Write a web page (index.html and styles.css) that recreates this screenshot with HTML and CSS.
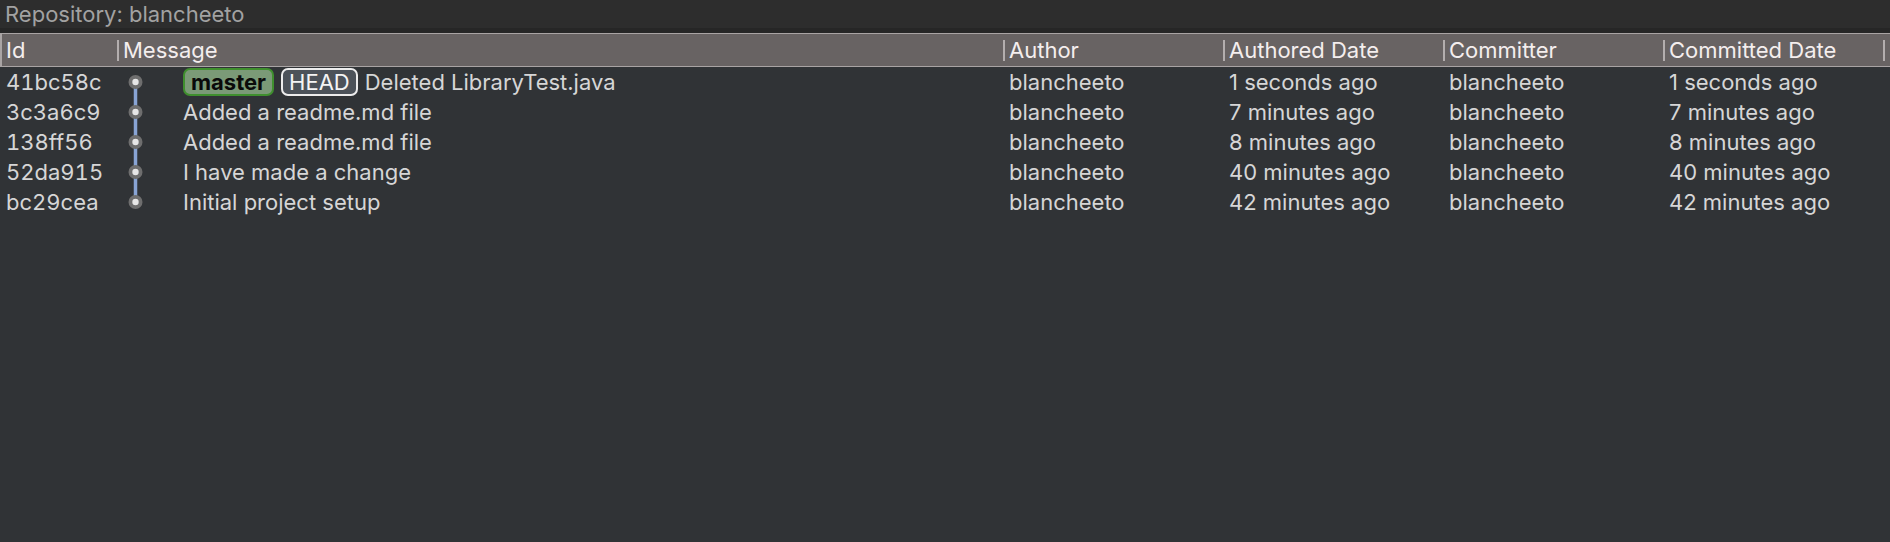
FILE: index.html
```html
<!DOCTYPE html>
<html>
<head>
<meta charset="utf-8">
<link rel="stylesheet" href="styles.css">
</head>
<body>
<div class="app">
  <div class="repo-bar">Repository: blancheeto</div>
  <div class="history">
    <div class="grid head">
      <div class="hcell">Id</div>
      <div class="hcell sep">Message</div>
      <div class="hcell sep">Author</div>
      <div class="hcell sep">Authored Date</div>
      <div class="hcell sep">Committer</div>
      <div class="hcell sep">Committed Date</div>
      <div class="hcell sep"></div>
    </div>

    <div class="grid row">
      <div class="cell id">41bc58c</div>
      <div class="cell msg">
        <svg class="graph" width="65" height="30" viewBox="0 0 65 30"><line x1="18.5" y1="15" x2="18.5" y2="30" stroke="#88a4d4" stroke-width="3.5"/><circle cx="18.5" cy="15" r="7" fill="#6e6e6e"/><circle cx="18.5" cy="15" r="3.2" fill="#e6e6e6"/></svg>
        <span class="badge badge-branch">master</span>
        <span class="badge badge-head">HEAD</span>
        <span class="text">Deleted LibraryTest.java</span>
      </div>
      <div class="cell">blancheeto</div>
      <div class="cell">1 seconds ago</div>
      <div class="cell">blancheeto</div>
      <div class="cell">1 seconds ago</div>
      <div class="cell"></div>
    </div>

    <div class="grid row">
      <div class="cell id">3c3a6c9</div>
      <div class="cell msg">
        <svg class="graph" width="65" height="30" viewBox="0 0 65 30"><line x1="18.5" y1="0" x2="18.5" y2="30" stroke="#88a4d4" stroke-width="3.5"/><circle cx="18.5" cy="15" r="7" fill="#6e6e6e"/><circle cx="18.5" cy="15" r="3.2" fill="#e6e6e6"/></svg>
        <span class="text">Added a readme.md file</span>
      </div>
      <div class="cell">blancheeto</div>
      <div class="cell">7 minutes ago</div>
      <div class="cell">blancheeto</div>
      <div class="cell">7 minutes ago</div>
      <div class="cell"></div>
    </div>

    <div class="grid row">
      <div class="cell id">138ff56</div>
      <div class="cell msg">
        <svg class="graph" width="65" height="30" viewBox="0 0 65 30"><line x1="18.5" y1="0" x2="18.5" y2="30" stroke="#88a4d4" stroke-width="3.5"/><circle cx="18.5" cy="15" r="7" fill="#6e6e6e"/><circle cx="18.5" cy="15" r="3.2" fill="#e6e6e6"/></svg>
        <span class="text">Added a readme.md file</span>
      </div>
      <div class="cell">blancheeto</div>
      <div class="cell">8 minutes ago</div>
      <div class="cell">blancheeto</div>
      <div class="cell">8 minutes ago</div>
      <div class="cell"></div>
    </div>

    <div class="grid row">
      <div class="cell id">52da915</div>
      <div class="cell msg">
        <svg class="graph" width="65" height="30" viewBox="0 0 65 30"><line x1="18.5" y1="0" x2="18.5" y2="30" stroke="#88a4d4" stroke-width="3.5"/><circle cx="18.5" cy="15" r="7" fill="#6e6e6e"/><circle cx="18.5" cy="15" r="3.2" fill="#e6e6e6"/></svg>
        <span class="text">I have made a change</span>
      </div>
      <div class="cell">blancheeto</div>
      <div class="cell">40 minutes ago</div>
      <div class="cell">blancheeto</div>
      <div class="cell">40 minutes ago</div>
      <div class="cell"></div>
    </div>

    <div class="grid row">
      <div class="cell id">bc29cea</div>
      <div class="cell msg">
        <svg class="graph" width="65" height="30" viewBox="0 0 65 30"><line x1="18.5" y1="0" x2="18.5" y2="15" stroke="#88a4d4" stroke-width="3.5"/><circle cx="18.5" cy="15" r="7" fill="#6e6e6e"/><circle cx="18.5" cy="15" r="3.2" fill="#e6e6e6"/></svg>
        <span class="text">Initial project setup</span>
      </div>
      <div class="cell">blancheeto</div>
      <div class="cell">42 minutes ago</div>
      <div class="cell">blancheeto</div>
      <div class="cell">42 minutes ago</div>
      <div class="cell"></div>
    </div>
  </div>
</div>
</body>
</html>
```

FILE: styles.css
```css
* { box-sizing: border-box; }
html, body {
  margin: 0;
  padding: 0;
  width: 1890px;
  height: 542px;
  overflow: hidden;
  background: #303336;
  font-family: "Inter", "Noto Sans", "Liberation Sans", sans-serif;
}
.app {
  display: flex;
  flex-direction: column;
  height: 100%;
}
.repo-bar {
  flex: none;
  height: 33px;
  padding-left: 5px;
  background: #2d2d2d;
  border-bottom: 5px solid #262626;
  color: #a2a2a2;
  font-size: 22px;
  display: flex;
  align-items: center;
}
.history {
  flex: 1;
  background: #303336;
}
.grid {
  display: grid;
  grid-template-columns: 117px 886px 220px 220px 220px 220px 1fr;
}
.head {
  height: 34px;
  background: #686363;
  border-top: 1px solid #a9a4a4;
  border-bottom: 1px solid #a9a4a4;
  box-shadow: inset 2px 0 0 #a9a4a4;
}
.hcell {
  display: flex;
  align-items: center;
  padding-left: 6px;
  color: #f4eeee;
  font-size: 22px;
  white-space: nowrap;
}
.sep {
  background-image: linear-gradient(#b3aeae, #b3aeae);
  background-repeat: no-repeat;
  background-size: 2px 21px;
  background-position: 0 center;
  padding-left: 6px;
}
.row {
  height: 30px;
}
.cell {
  display: flex;
  align-items: center;
  padding-left: 6px;
  color: #d6d6d6;
  font-size: 22px;
  white-space: nowrap;
}
.id {
  font-feature-settings: "tnum";
}
.msg {
  padding-left: 0;
}
.graph {
  flex: none;
  display: block;
  margin-right: 1px;
}
.badge {
  display: inline-flex;
  align-items: center;
  height: 28px;
  border-radius: 7px;
  font-size: 22px;
  padding: 0 6px;
  margin-right: 7px;
}
.badge-branch {
  background: #7b9a77;
  border: 2px solid #3f8f2e;
  color: #0a0a0a;
  font-weight: 700;
}
.badge-head {
  background: #4c5259;
  border: 2px solid #ececec;
  color: #f4f4f4;
}
```
